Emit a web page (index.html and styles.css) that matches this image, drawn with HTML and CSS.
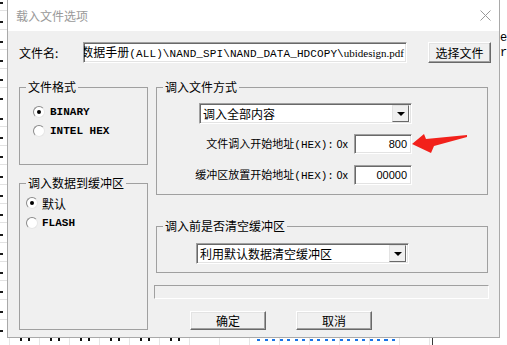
FILE: index.html
```html
<!DOCTYPE html>
<html lang="zh-CN">
<head>
  <meta charset="UTF-8" />
  <meta name="viewport" content="width=device-width, initial-scale=1.0"/>
  <title>载入文件选项</title>
  <link rel="stylesheet" href="styles.css">
</head>
<body>
  <div class="desk">
    <div class="strip-left"></div>

    <div class="dialog">
      <div class="titlebar">
        <span class="title">载入文件选项</span>
        <svg class="close" width="11" height="11" viewBox="0 0 11 11">
          <path d="M0.5 0.5 L10.5 10.5 M10.5 0.5 L0.5 10.5" stroke="#9a9a9a" stroke-width="1" fill="none"/>
        </svg>
      </div>

      <div class="content">
        <div class="file-row">
          <span class="file-label">文件名:</span>
          <div class="textbox path">
            <span class="path-text"><span class="cjk">数据手册</span>(ALL)\NAND_SPI\NAND_DATA_HDCOPY\<span class="serif">ubidesign.pdf</span></span>
          </div>
          <button class="btn btn-pick">选择文件</button>
        </div>

        <div class="main">
          <div class="col-left">
            <fieldset class="group g-format">
              <legend>文件格式</legend>
              <label class="radio"><span class="dot checked"></span>BINARY</label>
              <label class="radio"><span class="dot"></span>INTEL HEX</label>
            </fieldset>

            <fieldset class="group g-buffer">
              <legend>调入数据到缓冲区</legend>
              <label class="radio"><span class="dot checked"></span><span class="cjk">默认</span></label>
              <label class="radio"><span class="dot"></span>FLASH</label>
            </fieldset>
          </div>

          <div class="col-right">
            <fieldset class="group g-mode">
              <legend>调入文件方式</legend>
              <div class="mode-body">
                <div class="combo">
                  <span>调入全部内容</span>
                  <span class="drop"></span>
                </div>
                <div class="addr-row">
                  <span class="addr-label">文件调入开始地址<span class="mono">(HEX):</span> 0x</span>
                  <div class="textbox num">800</div>
                </div>
                <div class="addr-row second">
                  <span class="addr-label">缓冲区放置开始地址<span class="mono">(HEX):</span> 0x</span>
                  <div class="textbox num">00000</div>
                </div>
              </div>
            </fieldset>

            <fieldset class="group g-clear">
              <legend>调入前是否清空缓冲区</legend>
              <div class="combo">
                <span>利用默认数据清空缓冲区</span>
                <span class="drop"></span>
              </div>
            </fieldset>

            <div class="progress"></div>

            <div class="actions">
              <button class="btn">确定</button>
              <button class="btn">取消</button>
            </div>
          </div>
        </div>
      </div>
    </div>

    <div class="strip-right">e<br>r</div>
  </div>
  <div class="strip-bottom"></div>

  <svg class="arrow" width="60" height="24" viewBox="0 0 60 24">
    <polygon points="2,12 14,2 16,7 57,3 57,5 24,14 21,21" fill="#f2211b"/>
  </svg>
</body>
</html>
```

FILE: styles.css
```css
* {
  box-sizing: border-box;
}

body {
  margin: 0;
  width: 507px;
  height: 345px;
  overflow: hidden;
  background: #fff;
  font-family: "Noto Sans CJK SC", sans-serif;
  font-size: 12px;
  color: #000;
}

.desk {
  display: flex;
  height: 338px;
}

.strip-left {
  width: 7px;
  background-image:
    repeating-linear-gradient(180deg, transparent 0 2px, #1a1a1a 2px 4px, transparent 4px 19.3px),
    repeating-linear-gradient(180deg, transparent 0 10px, #e2e2e2 10px 11px, transparent 11px 19.3px);
  background-size: 3px 100%, 100% 100%;
  background-repeat: no-repeat;
}

.strip-right {
  width: 7px;
  overflow: hidden;
  padding-top: 31px;
  font-family: "Liberation Mono", monospace;
  font-size: 12px;
  line-height: 15px;
}

.strip-bottom {
  height: 7px;
  background-image:
    repeating-linear-gradient(90deg, transparent 0 20px, #111 20px 22px, transparent 22px 28px, #111 28px 30px),
    repeating-linear-gradient(90deg, #1a74e6 0 3px, transparent 3px 7.5px),
    linear-gradient(#3a3a3a, #3a3a3a),
    repeating-linear-gradient(90deg, transparent 0 9px, #e6e6e6 9px 10px, transparent 10px 30px);
  background-size: 200px 3px, 138px 2px, 1px 7px, 430px 100%;
  background-position: 0 0, 257px 1px, 432px 0, 0 0;
  background-repeat: no-repeat;
}

/* dialog window */
.dialog {
  width: 493px;
  border: 1px solid #a9a9a9;
  border-top: none;
  background: #f0f0f0;
  display: flex;
  flex-direction: column;
}

.titlebar {
  height: 31px;
  background: #fff;
  display: flex;
  align-items: center;
  justify-content: space-between;
  padding: 0 8px;
}

.title {
  color: #999;
  font-size: 12px;
  line-height: 14px;
}

.content {
  padding: 11px 0 0 11px;
}

.file-row {
  display: flex;
  align-items: center;
  height: 21px;
}

.file-label {
  width: 64px;
  line-height: 14px;
}

.textbox {
  background: #fff;
  border: 1px solid;
  border-color: #a0a0a0 #fff #fff #a0a0a0;
  box-shadow: inset 1px 1px 0 #696969, inset -1px -1px 0 #e3e3e3;
}

.path {
  width: 324px;
  height: 21px;
  display: flex;
  justify-content: flex-end;
  align-items: center;
  overflow: hidden;
  padding: 0 2px;
}

.path-text {
  flex-shrink: 0;
  white-space: nowrap;
  font-family: "Liberation Mono", "Noto Sans CJK SC", monospace;
  font-size: 11px;
  letter-spacing: 0.1px;
  line-height: 14px;
}

.path-text .cjk {
  font-family: "Noto Sans CJK SC", sans-serif;
  font-size: 12px;
  letter-spacing: 0;
}

.serif {
  font-family: "Liberation Serif", serif;
  letter-spacing: 0;
}

.mono {
  font-family: "Liberation Mono", monospace;
}

.btn {
  font-family: "Noto Sans CJK SC", sans-serif;
  font-size: 12px;
  line-height: 14px;
  padding: 0;
  background: #f0f0f0;
  color: #000;
  border: 1px solid;
  border-color: #fff #696969 #696969 #fff;
  box-shadow: inset -1px -1px 0 #a0a0a0, inset 1px 1px 0 #e3e3e3;
}

.btn-pick {
  margin-left: 21px;
  width: 63px;
  height: 21px;
}

.main {
  display: flex;
  gap: 8px;
  margin-top: 17px;
}

.col-left {
  width: 129px;
  display: flex;
  flex-direction: column;
  gap: 11px;
}

.col-right {
  width: 332px;
  display: flex;
  flex-direction: column;
}

.group {
  margin: 0;
  min-width: 0;
  padding: 0 6px;
  border: 1px solid #a0a0a0;
}

.group legend {
  padding: 0 2px;
  font-size: 12px;
  line-height: 14px;
}

.g-format {
  height: 85px;
  padding-top: 8px;
}

.g-format .radio {
  margin-left: 7px;
  height: 19px;
}

.g-buffer {
  height: 154px;
  padding-top: 3px;
}

.g-buffer .radio {
  height: 20px;
}

.g-buffer .dot {
  margin-right: 4px;
}

.radio {
  display: flex;
  align-items: center;
  font-family: "Liberation Mono", monospace;
  font-size: 11px;
  font-weight: bold;
}

.radio .cjk {
  font-family: "Noto Sans CJK SC", sans-serif;
  font-size: 12px;
  font-weight: normal;
}

.dot {
  width: 12px;
  height: 12px;
  margin-right: 5px;
  border-radius: 50%;
  background: #fff;
  border: 1px solid;
  border-color: #8a8a8a #e6e6e6 #e6e6e6 #8a8a8a;
  display: flex;
  align-items: center;
  justify-content: center;
}

.dot.checked::after {
  content: "";
  width: 4px;
  height: 4px;
  border-radius: 50%;
  background: #000;
}

.g-mode {
  height: 115px;
}

.mode-body {
  margin: 9px 0 0 36px;
  width: 213px;
}

.combo {
  width: 213px;
  height: 21px;
  background: #fff;
  border: 1px solid;
  border-color: #a0a0a0 #fff #fff #a0a0a0;
  box-shadow: inset 1px 1px 0 #696969, inset -1px -1px 0 #e3e3e3;
  display: flex;
  align-items: center;
  justify-content: space-between;
  padding: 0 2px 0 3px;
  line-height: 14px;
}

.drop {
  width: 17px;
  height: 17px;
  background: #f0f0f0;
  border: 1px solid;
  border-color: #e3e3e3 #696969 #696969 #e3e3e3;
  position: relative;
}

.drop::after {
  content: "";
  position: absolute;
  left: 4px;
  top: 6px;
  border-left: 4px solid transparent;
  border-right: 4px solid transparent;
  border-top: 4px solid #000;
}

.addr-row {
  display: flex;
  justify-content: flex-end;
  align-items: center;
  gap: 6px;
  margin-top: 10px;
}

.addr-row.second {
  margin-top: 11px;
}

.addr-label {
  flex-shrink: 0;
  white-space: nowrap;
  font-size: 11px;
  line-height: 14px;
}

.num {
  width: 58px;
  height: 20px;
  flex-shrink: 0;
  text-align: right;
  padding-right: 4px;
  font-family: "Liberation Sans", sans-serif;
  font-size: 11px;
  line-height: 18px;
}

.g-clear {
  height: 54px;
  margin-top: 24px;
}

.g-clear .combo {
  margin: 10px 0 0 33px;
}

.progress {
  margin: 12px 0 0 -2px;
  width: 335px;
  height: 14px;
  border: 1px solid;
  border-color: #a0a0a0 #fff #fff #a0a0a0;
}

.actions {
  display: flex;
  gap: 30px;
  margin: 12px 0 0 34px;
}

.actions .btn {
  width: 76px;
  height: 19px;
}

.arrow {
  position: absolute;
  left: 410px;
  top: 132px;
}
```
